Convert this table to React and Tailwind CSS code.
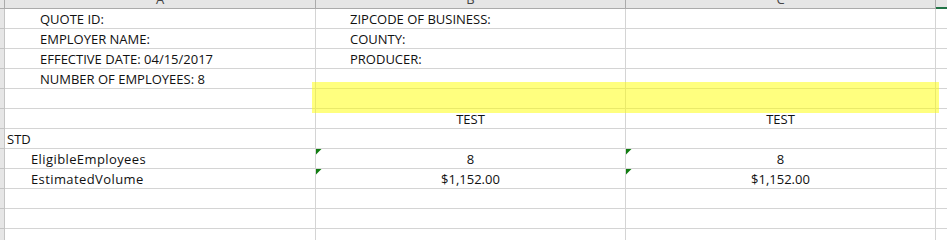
import React from "react";

const rows = [
  { a: "QUOTE ID:", aPad: "pl-[35px]", b: "ZIPCODE OF BUSINESS:", bPad: "pl-[34px]" },
  { a: "EMPLOYER NAME:", aPad: "pl-[35px]", b: "COUNTY:", bPad: "pl-[34px]" },
  { a: "EFFECTIVE DATE: 04/15/2017", aPad: "pl-[35px]", b: "PRODUCER:", bPad: "pl-[34px]" },
  { a: "NUMBER OF EMPLOYEES: 8", aPad: "pl-[35px]" },
  {},
  { b: "TEST", c: "TEST", center: true },
  { a: "STD", aPad: "pl-[2px]" },
  { a: "EligibleEmployees", aPad: "pl-[26px] tracking-[0.4px]", b: "8", c: "8", center: true, flag: true },
  { a: "EstimatedVolume", aPad: "pl-[26px] tracking-[0.4px]", b: "$1,152.00", c: "$1,152.00", center: true, flag: true },
  {},
  {},
  {},
];

function Flag() {
  return (
    <svg className="absolute left-0 top-0" width="6" height="6" viewBox="0 0 6 6">
      <polygon points="0,0 5.5,0 0,5.5" fill="#107c10" />
    </svg>
  );
}

function Cell({ text, pad, center, flag }) {
  return (
    <div
      className={
        "relative h-[20px] border-r border-b border-[#d4d4d4] whitespace-nowrap overflow-visible leading-[20px] " +
        (center ? "text-center" : pad || "")
      }
    >
      {flag && <Flag />}
      {text}
    </div>
  );
}

export default function App() {
  return (
    <div
      className="relative w-[947px] h-[240px] overflow-hidden bg-white text-[13px] text-[#111]"
      style={{ fontFamily: "'Open Sans', Lato, sans-serif" }}
    >
      <div className="grid grid-cols-[5px_311px_310px_310px_11px]">
        {/* header row */}
        <div className="h-[9px] bg-[#e6e6e6] border-r border-b border-[#ababab]" />
        {["A", "B", "C"].map((l) => (
          <div
            key={l}
            className="h-[9px] bg-[#e6e6e6] border-r border-b border-[#ababab] overflow-hidden flex justify-center"
          >
            <span className="leading-none -mt-[7px] text-[#444]">{l}</span>
          </div>
        ))}
        <div className="h-[9px] bg-[#e6e6e6] border-b-2 border-[#217346]" />

        {rows.map((r, i) => (
          <React.Fragment key={i}>
            <div className="h-[20px] bg-[#e6e6e6] border-r border-b border-[#c4c4c4]" />
            <Cell text={r.a} pad={r.aPad} />
            <Cell text={r.b} pad={r.bPad} center={r.center} flag={r.flag} />
            <Cell text={r.c} center={r.center} flag={r.flag} />
            <div className="h-[20px] border-b border-[#d4d4d4]" />
          </React.Fragment>
        ))}
      </div>

      {/* yellow highlight overlay */}
      <div className="absolute left-[312px] top-[82px] w-[627px] h-[31px] bg-[#ffff00]/50" />
    </div>
  );
}
